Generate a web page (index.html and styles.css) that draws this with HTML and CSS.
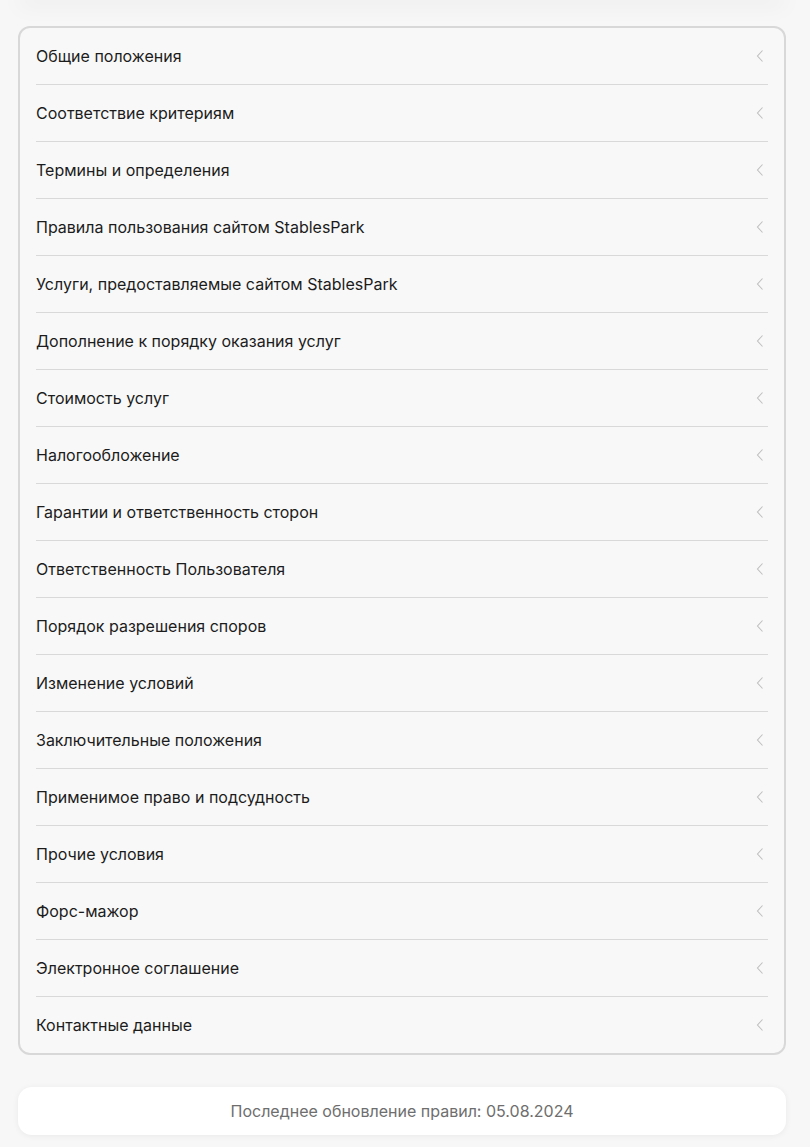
FILE: index.html
```html
<!DOCTYPE html>
<html lang="ru">
<head>
<meta charset="utf-8">
<title>Правила</title>
<link rel="stylesheet" href="styles.css">
</head>
<body>
<div class="page">
  <div class="prev-shadow"></div>
  <ul class="rules">
    <li class="rule"><span>Общие положения</span><svg class="chev" viewBox="0 0 8 14"><path d="M6.5 1.5 1.5 7l5 5.5"/></svg></li>
    <li class="rule"><span>Соответствие критериям</span><svg class="chev" viewBox="0 0 8 14"><path d="M6.5 1.5 1.5 7l5 5.5"/></svg></li>
    <li class="rule"><span>Термины и определения</span><svg class="chev" viewBox="0 0 8 14"><path d="M6.5 1.5 1.5 7l5 5.5"/></svg></li>
    <li class="rule"><span>Правила пользования сайтом StablesPark</span><svg class="chev" viewBox="0 0 8 14"><path d="M6.5 1.5 1.5 7l5 5.5"/></svg></li>
    <li class="rule"><span>Услуги, предоставляемые сайтом StablesPark</span><svg class="chev" viewBox="0 0 8 14"><path d="M6.5 1.5 1.5 7l5 5.5"/></svg></li>
    <li class="rule"><span>Дополнение к порядку оказания услуг</span><svg class="chev" viewBox="0 0 8 14"><path d="M6.5 1.5 1.5 7l5 5.5"/></svg></li>
    <li class="rule"><span>Стоимость услуг</span><svg class="chev" viewBox="0 0 8 14"><path d="M6.5 1.5 1.5 7l5 5.5"/></svg></li>
    <li class="rule"><span>Налогообложение</span><svg class="chev" viewBox="0 0 8 14"><path d="M6.5 1.5 1.5 7l5 5.5"/></svg></li>
    <li class="rule"><span>Гарантии и ответственность сторон</span><svg class="chev" viewBox="0 0 8 14"><path d="M6.5 1.5 1.5 7l5 5.5"/></svg></li>
    <li class="rule"><span>Ответственность Пользователя</span><svg class="chev" viewBox="0 0 8 14"><path d="M6.5 1.5 1.5 7l5 5.5"/></svg></li>
    <li class="rule"><span>Порядок разрешения споров</span><svg class="chev" viewBox="0 0 8 14"><path d="M6.5 1.5 1.5 7l5 5.5"/></svg></li>
    <li class="rule"><span>Изменение условий</span><svg class="chev" viewBox="0 0 8 14"><path d="M6.5 1.5 1.5 7l5 5.5"/></svg></li>
    <li class="rule"><span>Заключительные положения</span><svg class="chev" viewBox="0 0 8 14"><path d="M6.5 1.5 1.5 7l5 5.5"/></svg></li>
    <li class="rule"><span>Применимое право и подсудность</span><svg class="chev" viewBox="0 0 8 14"><path d="M6.5 1.5 1.5 7l5 5.5"/></svg></li>
    <li class="rule"><span>Прочие условия</span><svg class="chev" viewBox="0 0 8 14"><path d="M6.5 1.5 1.5 7l5 5.5"/></svg></li>
    <li class="rule"><span>Форс-мажор</span><svg class="chev" viewBox="0 0 8 14"><path d="M6.5 1.5 1.5 7l5 5.5"/></svg></li>
    <li class="rule"><span>Электронное соглашение</span><svg class="chev" viewBox="0 0 8 14"><path d="M6.5 1.5 1.5 7l5 5.5"/></svg></li>
    <li class="rule"><span>Контактные данные</span><svg class="chev" viewBox="0 0 8 14"><path d="M6.5 1.5 1.5 7l5 5.5"/></svg></li>
  </ul>
  <div class="updated">Последнее обновление правил: 05.08.2024</div>
</div>
</body>
</html>
```

FILE: styles.css
```css
html, body {
  margin: 0;
  padding: 0;
  background: #f7f7f7;
}
body {
  font-family: Inter, "Noto Sans", sans-serif;
  color: #1c1c1c;
}
.page {
  padding: 0 24px 12px 18px;
  overflow: hidden;
}
.prev-shadow {
  height: 0;
  margin: 0 6px;
  box-shadow: 0 0 22px 6px rgba(0, 0, 0, 0.05);
}
.rules {
  list-style: none;
  margin: 26px 0 0;
  padding: 0 16px;
  border: 2px solid #d8d8d8;
  border-radius: 12px;
  background: #f8f8f8;
}
.rule {
  height: 56px;
  display: flex;
  align-items: center;
  justify-content: space-between;
  font-size: 16px;
  line-height: 20px;
  border-bottom: 1px solid #d9d9d9;
}
.rule:last-child {
  border-bottom: none;
}
.chev {
  width: 8px;
  height: 14px;
  margin-right: 4px;
  fill: none;
  stroke: #bfbfbf;
  stroke-width: 1.1;
}
.updated {
  margin-top: 32px;
  height: 48px;
  display: flex;
  align-items: center;
  justify-content: center;
  background: #fff;
  border-radius: 14px;
  box-shadow: 0 1px 6px rgba(0, 0, 0, 0.06);
  font-size: 16px;
  color: #6e6e6e;
}
```
